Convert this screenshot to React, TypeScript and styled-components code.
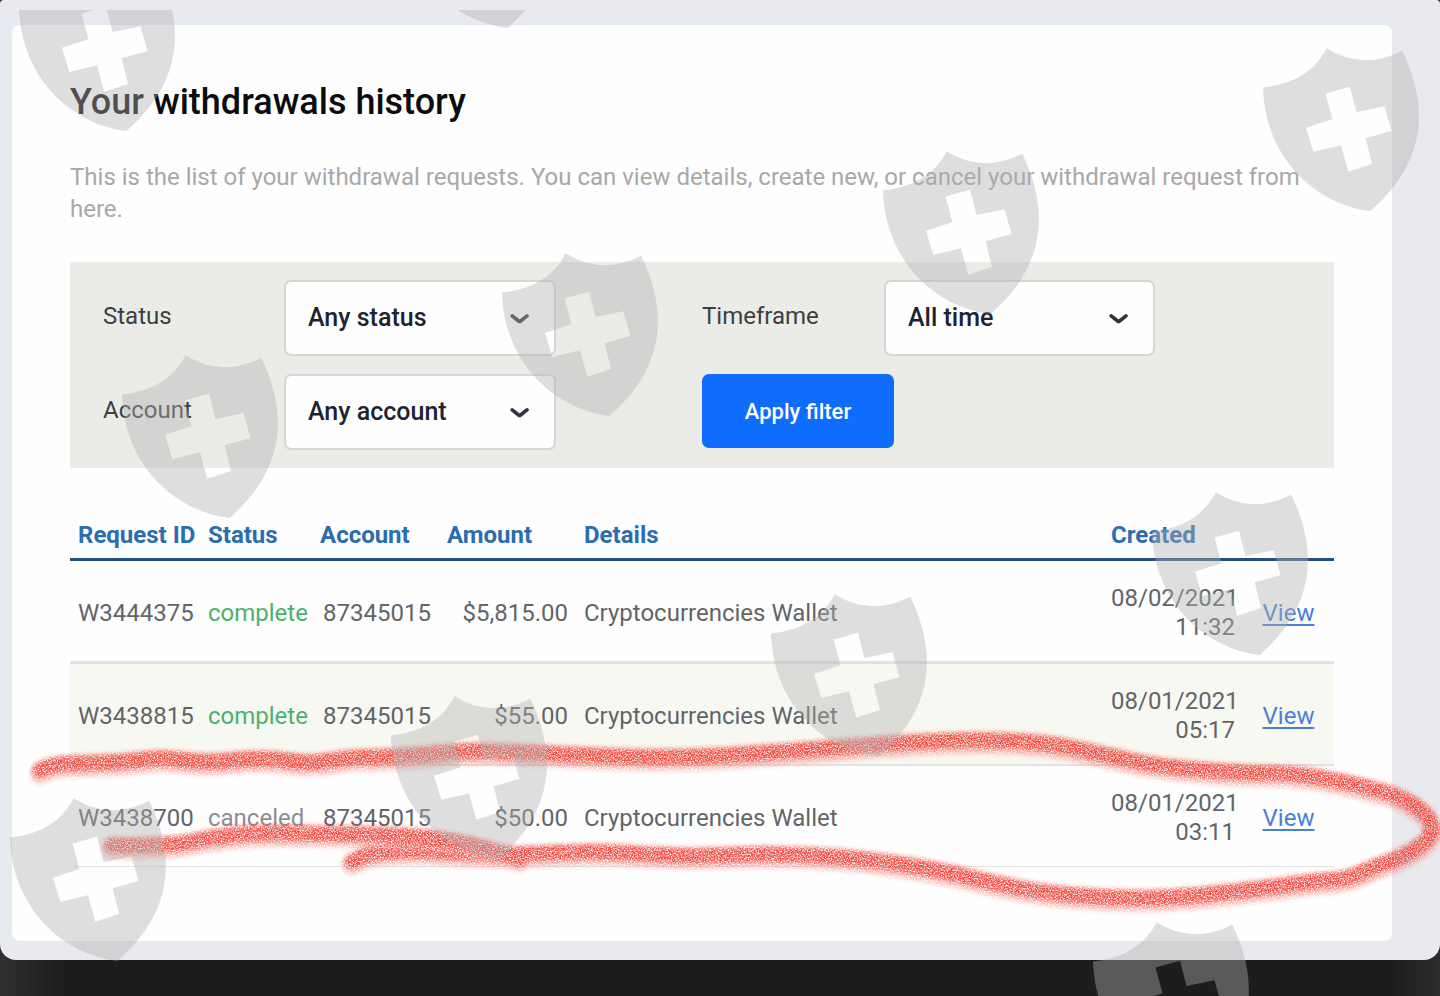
import React from "react";
import styled, { createGlobalStyle } from "styled-components";

const GlobalStyle = createGlobalStyle`
  * { box-sizing: border-box; }
  body {
    margin: 0;
    background: #1d1d1d;
    font-family: Roboto, "Liberation Sans", sans-serif;
  }
`;

const Page = styled.div`
  position: relative;
  min-height: 100vh;
  overflow: hidden;
  background: linear-gradient(90deg, #303030 0, #1d1d1d 60px, #1d1d1d calc(100% - 50px), #2c2c2c 100%);
`;

const Modal = styled.main`
  padding: 17px 48px 19px 0;
  background: #e9eaee;
  border-radius: 4px 4px 16px 16px;
`;

const Frame = styled.div`
  padding: 8px 0 0 12px;
  background: #e7eaf0;
`;

const Card = styled.section`
  padding: 59px 58px 74px;
  background: #fefefe;
  border-radius: 8px;
`;

const Title = styled.h1`
  margin: 0;
  font-size: 36px;
  line-height: 36px;
  font-weight: 500;
  color: #0c0c0e;
`;

const Intro = styled.p`
  margin: 41px 0 37px;
  font-size: 24px;
  line-height: 32px;
  color: #a8a8a8;
`;

const FilterPanel = styled.form`
  display: grid;
  grid-template-columns: 181px 272px 146px 182px 271px;
  row-gap: 18px;
  align-items: center;
  padding: 18px 33px;
  background: #ebece7;
`;

const Label = styled.label<{ $second?: boolean }>`
  grid-column: ${(p) => (p.$second ? 4 : 1)};
  padding-bottom: 4px;
  font-size: 24px;
  line-height: 32px;
  color: #3c4043;
`;

const SelectBox = styled.div`
  position: relative;
`;

const Select = styled.select`
  display: block;
  width: 100%;
  height: 76px;
  padding: 0 48px 2px 22px;
  appearance: none;
  border: 2px solid #d6d7d3;
  border-radius: 7px;
  background: #fefefe;
  font-family: inherit;
  font-size: 25px;
  font-weight: 500;
  color: #1c2430;
`;

const Chevron = styled.svg`
  position: absolute;
  right: 26px;
  top: 32px;
  width: 20px;
  height: 14px;
  pointer-events: none;
`;

const ApplyButton = styled.button`
  grid-column: 4 / 6;
  align-self: start;
  justify-self: start;
  width: 192px;
  height: 74px;
  padding: 0;
  border: 0;
  border-radius: 7px;
  background: #0f6dfd;
  color: #ffffff;
  font-family: inherit;
  font-size: 22px;
  font-weight: 500;
`;

const Table = styled.table`
  width: 100%;
  margin-top: 42px;
  table-layout: fixed;
  border-collapse: separate;
  border-spacing: 0;
  font-size: 24px;
  line-height: 29px;
  color: #626568;
`;

const Col = styled.col<{ $w?: number }>`
  width: ${(p) => (p.$w ? `${p.$w}px` : "auto")};
`;

const HeadCell = styled.th`
  height: 51px;
  padding: 2px 0 0 8px;
  border-bottom: 3px solid #22507f;
  text-align: left;
  white-space: nowrap;
  font-weight: 700;
  color: #2a6db0;
`;

const Row = styled.tr<{ $line: number }>`
  td {
    height: ${(p) => 100 + p.$line}px;
    border-bottom: ${(p) => p.$line}px solid #e1e3e2;
  }
  &:nth-child(even) {
    background: #f8f8f2;
  }
`;

const Cell = styled.td<{ $align?: string }>`
  padding: 4px 8px 0;
  text-align: ${(p) => p.$align || "left"};
  white-space: nowrap;
`;

const CreatedCell = styled(Cell)`
  white-space: normal;
`;

const Status = styled.span<{ $done: boolean }>`
  color: ${(p) => (p.$done ? "#4bb26c" : "#8b8e92")};
`;

const ViewLink = styled.a`
  color: #4a7fd6;
  text-decoration: underline;
  text-decoration-thickness: 2px;
  text-underline-offset: 3px;
`;

const Overlay = styled.svg`
  position: absolute;
  top: 0;
  left: 0;
  width: 1440px;
  height: 996px;
  pointer-events: none;
`;

const rows = [
  { id: "W3444375", status: "complete", amount: "$5,815.00", date: "08/02/2021", time: "11:32", line: 3 },
  { id: "W3438815", status: "complete", amount: "$55.00", date: "08/01/2021", time: "05:17", line: 2 },
  { id: "W3438700", status: "canceled", amount: "$50.00", date: "08/01/2021", time: "03:11", line: 1 },
];

type Point = [number, number];

const loopStroke: Point[] = [
  [40, 770], [52, 764], [80, 763], [120, 762], [165, 757], [205, 763], [265, 757], [310, 764], [350, 757],
  [385, 757], [430, 754], [469, 750], [540, 753], [630, 757], [701, 757], [773, 752], [844, 747], [937, 740],
  [1007, 740], [1057, 744], [1107, 755], [1157, 766], [1240, 773], [1300, 773], [1373, 788], [1407, 799],
  [1431, 818], [1433, 836], [1407, 855], [1373, 867], [1347, 879], [1313, 881], [1273, 887], [1173, 898],
  [1107, 898], [1040, 892], [990, 882], [940, 870], [862, 858], [773, 853], [701, 856], [666, 855], [594, 851],
  [523, 854], [480, 854], [417, 850], [373, 852], [352, 861],
];

const underStroke: Point[] = [
  [112, 845], [167, 846], [207, 838], [247, 833], [300, 833], [367, 834], [433, 837], [480, 846], [520, 858],
];

const smooth = (pts: Point[]) => {
  let d = `M${pts[0][0]} ${pts[0][1]}`;
  for (let i = 1; i < pts.length - 1; i++) {
    const mx = (pts[i][0] + pts[i + 1][0]) / 2;
    const my = (pts[i][1] + pts[i + 1][1]) / 2;
    d += ` Q${pts[i][0]} ${pts[i][1]} ${mx} ${my}`;
  }
  const last = pts[pts.length - 1];
  return `${d} L${last[0]} ${last[1]}`;
};

const shields: Point[] = [
  [19, -32], [400, -135], [1263, 48], [883, 151], [502, 253], [122, 355],
  [1152, 492], [771, 594], [391, 696], [10, 798], [1093, 922],
];

function CrayonMarks() {
  return (
    <Overlay viewBox="0 0 1440 996" aria-hidden="true">
      <defs>
        <filter id="crayon" filterUnits="userSpaceOnUse" x="0" y="700" width="1440" height="240" colorInterpolationFilters="sRGB">
          <feGaussianBlur in="SourceGraphic" stdDeviation="2" result="soft" />
          <feTurbulence type="fractalNoise" baseFrequency="0.7" numOctaves="3" seed="7" result="noise" />
          <feColorMatrix in="noise" type="matrix" values="0 0 0 0 0  0 0 0 0 0  0 0 0 0 0  2.6 0 0 0 -0.6" result="grain" />
          <feComposite in="soft" in2="grain" operator="in" />
        </filter>
      </defs>
      <g filter="url(#crayon)" fill="none" strokeLinecap="round" strokeLinejoin="round">
        {[loopStroke, underStroke].map((pts, i) => (
          <g key={i}>
            <path d={smooth(pts)} stroke="#f98c84" strokeOpacity="0.6" strokeWidth="20" transform="translate(0 4)" />
            <path d={smooth(pts)} stroke="#f2473d" strokeOpacity="0.95" strokeWidth="16" />
          </g>
        ))}
      </g>
    </Overlay>
  );
}

function ShieldMarks() {
  return (
    <Overlay viewBox="0 0 1440 996" aria-hidden="true">
      <defs>
        <clipPath id="below-edge">
          <rect x="0" y="10" width="1440" height="986" />
        </clipPath>
      </defs>
      <g clipPath="url(#below-edge)" fill="#b0b0b0" fillOpacity="0.406" fillRule="evenodd">
        {shields.map(([x, y]) => (
          <path
            key={`${x}-${y}`}
            transform={`translate(${x} ${y})`}
            d="M0 39.5 Q46 35 63.7 0.3 Q99 23 139.3 2.7 C166 58 164 114 107.5 163 C55 157 2 112 0 39.5 Z
               M62.5 45.5 L87 38.7 L93.5 64 L121.5 58.3 L128.5 83 L102.7 90.3 L109 116 L85.3 123.7 L78 97.3 L50.3 104 L43 79.7 L69.5 71.3 Z"
          />
        ))}
      </g>
    </Overlay>
  );
}

function FilterSelect({ id, value }: { id: string; value: string }) {
  return (
    <SelectBox>
      <Select id={id} defaultValue={value}>
        <option>{value}</option>
      </Select>
      <Chevron viewBox="0 0 20 14" aria-hidden="true">
        <path d="M2.2 3.8 L8.6 9 Q9.6 9.8 10.6 9 L17 3.8" fill="none" stroke="#2e3440" strokeWidth="3.6" strokeLinecap="round" strokeLinejoin="round" />
      </Chevron>
    </SelectBox>
  );
}

export default function App() {
  return (
    <Page>
      <GlobalStyle />
      <Modal>
        <Frame>
          <Card>
            <Title>Your withdrawals history</Title>
            <Intro>
              This is the list of your withdrawal requests. You can view details, create new, or cancel your
              withdrawal request from here.
            </Intro>
            <FilterPanel onSubmit={(e) => e.preventDefault()}>
              <Label htmlFor="status">Status</Label>
              <FilterSelect id="status" value="Any status" />
              <Label htmlFor="timeframe" $second>Timeframe</Label>
              <FilterSelect id="timeframe" value="All time" />
              <Label htmlFor="account">Account</Label>
              <FilterSelect id="account" value="Any account" />
              <ApplyButton type="submit">Apply filter</ApplyButton>
            </FilterPanel>
            <Table>
              <colgroup>
                <Col $w={130} />
                <Col $w={112} />
                <Col $w={127} />
                <Col $w={137} />
                <Col />
                <Col $w={140} />
                <Col $w={91} />
              </colgroup>
              <thead>
                <tr>
                  <HeadCell>Request ID</HeadCell>
                  <HeadCell>Status</HeadCell>
                  <HeadCell>Account</HeadCell>
                  <HeadCell>Amount</HeadCell>
                  <HeadCell>Details</HeadCell>
                  <HeadCell>Created</HeadCell>
                  <HeadCell aria-label="Actions" />
                </tr>
              </thead>
              <tbody>
                {rows.map((r) => (
                  <Row key={r.id} $line={r.line}>
                    <Cell>{r.id}</Cell>
                    <Cell $align="center">
                      <Status $done={r.status === "complete"}>{r.status}</Status>
                    </Cell>
                    <Cell $align="right">87345015</Cell>
                    <Cell $align="right">{r.amount}</Cell>
                    <Cell>Cryptocurrencies Wallet</Cell>
                    <CreatedCell $align="right">
                      {r.date} {r.time}
                    </CreatedCell>
                    <Cell $align="center">
                      <ViewLink href="#view">View</ViewLink>
                    </Cell>
                  </Row>
                ))}
              </tbody>
            </Table>
          </Card>
        </Frame>
      </Modal>
      <CrayonMarks />
      <ShieldMarks />
    </Page>
  );
}
